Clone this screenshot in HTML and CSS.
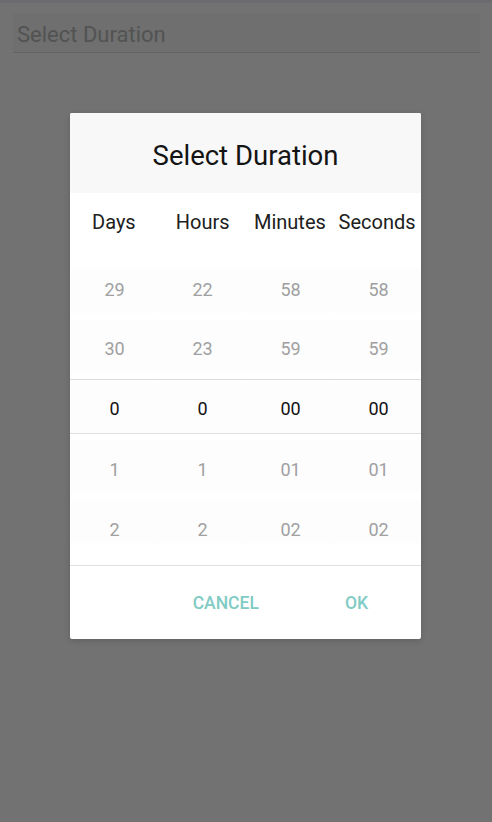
FILE: index.html
```html
<!DOCTYPE html>
<html>
<head>
<meta charset="utf-8">
<link rel="stylesheet" href="styles.css">
</head>
<body>
<div class="statusbar"></div>
<div class="page">
  <div class="field"><span class="placeholder">Select Duration</span></div>
</div>
<div class="overlay">
  <div class="dialog">
    <div class="dlg-head">Select Duration</div>
    <div class="labels">
      <div>Days</div><div>Hours</div><div>Minutes</div><div>Seconds</div>
    </div>
    <div class="wheel">
      <div class="row"><div class="cell">29</div><div class="cell">22</div><div class="cell">58</div><div class="cell">58</div></div>
      <div class="row"><div class="cell">30</div><div class="cell">23</div><div class="cell">59</div><div class="cell">59</div></div>
      <div class="row sel"><div class="cell">0</div><div class="cell">0</div><div class="cell">00</div><div class="cell">00</div></div>
      <div class="row"><div class="cell">1</div><div class="cell">1</div><div class="cell">01</div><div class="cell">01</div></div>
      <div class="row"><div class="cell">2</div><div class="cell">2</div><div class="cell">02</div><div class="cell">02</div></div>
    </div>
    <div class="actions">
      <button class="btn cancel">CANCEL</button>
      <button class="btn ok">OK</button>
    </div>
  </div>
</div>
</body>
</html>
```
FILE: styles.css
```css
* { box-sizing: border-box; }
html, body { margin: 0; padding: 0; }
body {
  width: 492px;
  height: 822px;
  background: #717271;
  font-family: Roboto, "Noto Sans", sans-serif;
  position: relative;
  overflow: hidden;
}
.statusbar { height: 3px; background: #6b6c70; }
.page { padding: 10px 12px 0 13px; }
.field {
  height: 40px;
  background: #6e6f6e;
  border-bottom: 1px solid #626362;
  padding: 9px 0 0 4px;
}
.placeholder { font-size: 22px; color: #525352; }
.overlay {
  position: absolute;
  left: 0; top: 0; right: 0; bottom: 0;
  display: flex;
  justify-content: center;
  padding-top: 113px;
}
.dialog {
  width: 351px;
  height: 526px;
  margin-left: -1px;
  background: #fff;
  border-radius: 2px;
  overflow: hidden;
  box-shadow: 0 2px 6px rgba(0,0,0,0.15);
  display: flex;
  flex-direction: column;
}
.dlg-head {
  height: 80px;
  background: #f8f8f8;
  display: flex;
  align-items: center;
  justify-content: center;
  padding-top: 4px;
  font-size: 27.5px;
  color: #141414;
}
.labels {
  height: 66px;
  display: grid;
  grid-template-columns: repeat(4, 1fr);
  align-items: start;
  padding-top: 17px;
  font-size: 20px;
  color: #202020;
  text-align: center;
}
.labels div:nth-child(2) { padding-left: 2px; }
.labels div:nth-child(3) { padding-left: 1px; }
.wheel { height: 300px; display: flex; flex-direction: column; }
.row {
  height: 60px;
  display: grid;
  grid-template-columns: repeat(4, 1fr);
  gap: 1px;
  padding: 9px 0 6px;
  font-size: 18px;
  color: #a0a0a0;
}
.row:nth-child(2) { padding: 1px 0 6px; }
.row:nth-child(4) { padding: 1px 0 6px; }
.row:nth-child(5) { padding: 1px 0 16px; }
.cell {
  background: #fdfdfd;
  display: flex;
  align-items: center;
  justify-content: center;
  padding-left: 2px;
}
.row:nth-child(1) .cell { padding-bottom: 2px; }
.row:nth-child(2) .cell { padding-top: 4px; }
.row:nth-child(4) .cell { padding-top: 5px; }
.row:nth-child(5) .cell { padding-top: 15px; }
.row.sel {
  height: 60px;
  padding: 0 0 0;
  border-top: 1px solid #dedede;
  color: #111;
  position: relative;
}
.row.sel::after {
  content: "";
  position: absolute;
  left: 0; right: 0;
  top: 53px;
  height: 1px;
  background: #dedede;
}
.row.sel .cell { height: 53px; padding-top: 4px; }
.actions {
  margin-top: 6px;
  border-top: 1px solid #e0e0e0;
  flex: 1;
  display: flex;
  align-items: center;
  justify-content: flex-end;
  padding-right: 53px;
}
.btn {
  background: none;
  border: none;
  font-family: Roboto, "Noto Sans", sans-serif;
  font-size: 17.5px;
  font-weight: 500;
  color: #80cbc4;
  padding: 0;
}
.cancel { margin-right: 86px; }
```
